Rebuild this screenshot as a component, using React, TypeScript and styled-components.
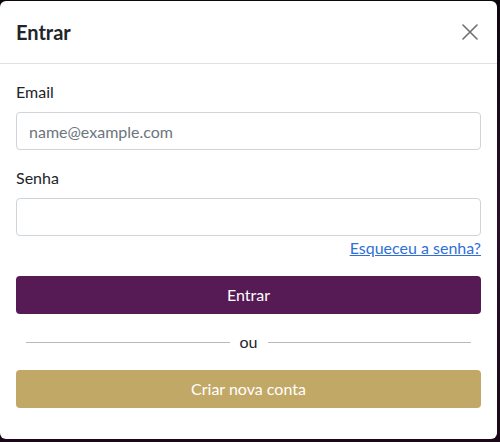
import React from "react";
import styled, { createGlobalStyle } from "styled-components";

const GlobalStyle = createGlobalStyle`
  html, body {
    margin: 0;
    padding: 0;
    background: #1b0a1c;
  }
  body {
    font-family: Lato, "Noto Sans", sans-serif;
    color: #212529;
  }
  * { box-sizing: border-box; }
`;

const Backdrop = styled.div`
  width: 500px;
  height: 442px;
  padding: 1px 3px 3px 0;
  background: linear-gradient(180deg, #0d060d 0%, #2a0f2b 50%, #1a0818 100%);
`;

const Modal = styled.div`
  height: 100%;
  background: #fff;
  border-radius: 6px;
  display: flex;
  flex-direction: column;
  overflow: hidden;
`;

const Header = styled.div`
  display: flex;
  align-items: center;
  justify-content: space-between;
  padding: 16px 16px;
  border-bottom: 1px solid #dee2e6;
`;

const Title = styled.h5`
  margin: 0;
  font-size: 20px;
  font-weight: 700;
  line-height: 30px;
  color: #212529;
`;

const CloseButton = styled.button`
  width: 24px;
  height: 24px;
  padding: 4px;
  border: none;
  background: transparent;
  display: flex;
  align-items: center;
  justify-content: center;
  cursor: pointer;
  margin-right: -1px;
`;

const Body = styled.div`
  padding: 16px;
  display: flex;
  flex-direction: column;
`;

const Field = styled.div<{ $mb?: number }>`
  display: flex;
  flex-direction: column;
  margin-bottom: ${(p) => (p.$mb ?? 16)}px;
`;

const Label = styled.label`
  font-size: 16px;
  line-height: 24px;
  margin-bottom: 8px;
`;

const Input = styled.input`
  height: 38px;
  width: 100%;
  padding: 6px 12px;
  font-family: inherit;
  font-size: 16px;
  color: #212529;
  border: 1px solid #ced4da;
  border-radius: 4px;
  outline: none;
  &::placeholder {
    color: #6c757d;
  }
`;

const LinkRow = styled.div`
  display: flex;
  justify-content: flex-end;
  margin-bottom: 16px;
`;

const Link = styled.a`
  font-size: 16px;
  line-height: 24px;
  color: #2f6fd6;
  text-decoration: underline;
`;

const Button = styled.button<{ $bg: string }>`
  width: 100%;
  height: 38px;
  border: none;
  border-radius: 4px;
  background: ${(p) => p.$bg};
  color: #fff;
  font-family: inherit;
  font-size: 16px;
  line-height: 24px;
`;

const Divider = styled.div`
  display: flex;
  align-items: center;
  gap: 10px;
  margin: 16px 10px;
  font-size: 16px;
  line-height: 24px;
  color: #212529;
  &::before, &::after {
    content: "";
    flex: 1;
    height: 1px;
    background: #b8b8b8;
  }
`;

export default function App() {
  return (
    <>
      <GlobalStyle />
      <Backdrop>
        <Modal>
          <Header>
            <Title>Entrar</Title>
            <CloseButton aria-label="Fechar">
              <svg width="16" height="16" viewBox="0 0 16 16">
                <path d="M1 1 L15 15 M15 1 L1 15" stroke="#6f6f6f" strokeWidth="1.6" strokeLinecap="round" />
              </svg>
            </CloseButton>
          </Header>
          <Body>
            <Field>
              <Label>Email</Label>
              <Input type="email" placeholder="name@example.com" />
            </Field>
            <Field $mb={0}>
              <Label>Senha</Label>
              <Input type="password" />
            </Field>
            <LinkRow>
              <Link href="#">Esqueceu a senha?</Link>
            </LinkRow>
            <Button $bg="#561b54">Entrar</Button>
            <Divider>ou</Divider>
            <Button $bg="#c2a866">Criar nova conta</Button>
          </Body>
        </Modal>
      </Backdrop>
    </>
  );
}
